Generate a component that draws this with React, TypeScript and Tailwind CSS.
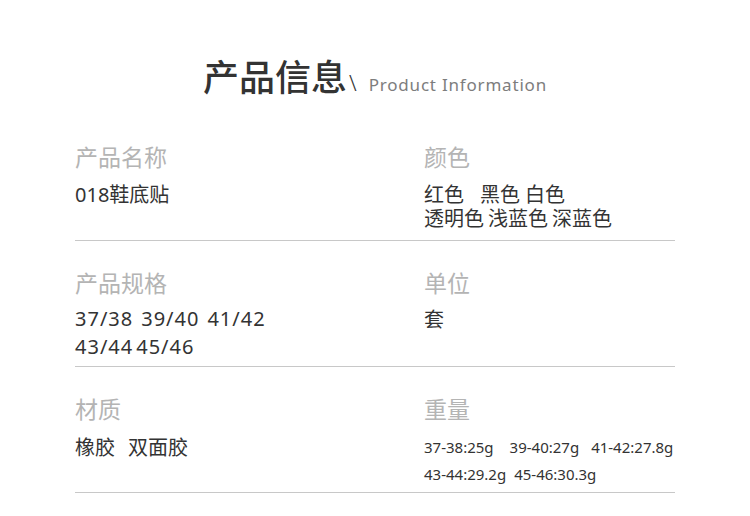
import React from "react";

const font = { fontFamily: '"Noto Sans", "Noto Sans CJK SC", sans-serif' };

function Label({ children }: { children: React.ReactNode }) {
  return <div className="text-[23px] leading-[30px] text-[#b4b4b4]">{children}</div>;
}

export default function App() {
  return (
    <div className="w-[750px] h-[516px] bg-white overflow-hidden" style={font}>
      <div className="pt-[58px] flex justify-center items-baseline">
        <span className="text-[36px] leading-[40px] font-medium text-[#333333]">产品信息</span>
        <span className="text-[22px] leading-[40px] text-[#333333] ml-[2px] font-light">\</span>
        <span className="text-[17px] leading-[40px] text-[#7d7d7d] ml-[12px] tracking-[0.8px]">Product Information</span>
      </div>
      <div className="mt-[10px] mx-auto w-[600px]">
        {/* Row 1 */}
        <div className="h-[126px] border-b border-[#c8c8c8] pt-[27px] grid grid-cols-[349px_1fr]">
          <div>
            <Label>产品名称</Label>
            <div className="mt-[10px] text-[20px] leading-[26px] text-[#333333]">018鞋底贴</div>
          </div>
          <div>
            <Label>颜色</Label>
            <div className="mt-[11px] text-[20px] leading-[24px] text-[#333333]">
              <div>
                <span>红色</span>
                <span className="ml-[16px]">黑色</span>
                <span className="ml-[5px]">白色</span>
              </div>
              <div>
                <span>透明色</span>
                <span className="ml-[4px]">浅蓝色</span>
                <span className="ml-[4px]">深蓝色</span>
              </div>
            </div>
          </div>
        </div>
        {/* Row 2 */}
        <div className="h-[126px] border-b border-[#c8c8c8] pt-[27px] grid grid-cols-[349px_1fr]">
          <div>
            <Label>产品规格</Label>
            <div className="mt-[7px] text-[20px] leading-[28px] text-[#333333] tracking-[1px]">
              <div>
                <span>37/38</span>
                <span className="ml-[8px]">39/40</span>
                <span className="ml-[8px]">41/42</span>
              </div>
              <div>
                <span>43/44</span>
                <span className="ml-[3px]">45/46</span>
              </div>
            </div>
          </div>
          <div>
            <Label>单位</Label>
            <div className="mt-[9px] text-[20px] leading-[26px] text-[#333333]">套</div>
          </div>
        </div>
        {/* Row 3 */}
        <div className="h-[126px] border-b border-[#c8c8c8] pt-[27px] grid grid-cols-[349px_1fr]">
          <div>
            <Label>材质</Label>
            <div className="mt-[11px] text-[20px] leading-[26px] text-[#333333]">
              <span>橡胶</span>
              <span className="ml-[13px]">双面胶</span>
            </div>
          </div>
          <div>
            <Label>重量</Label>
            <div className="mt-[10px] text-[15px] leading-[27px] text-[#333333]">
              <div>
                <span>37-38:25g</span>
                <span className="ml-[16px]">39-40:27g</span>
                <span className="ml-[12px]">41-42:27.8g</span>
              </div>
              <div>
                <span>43-44:29.2g</span>
                <span className="ml-[8px]">45-46:30.3g</span>
              </div>
            </div>
          </div>
        </div>
      </div>
    </div>
  );
}
